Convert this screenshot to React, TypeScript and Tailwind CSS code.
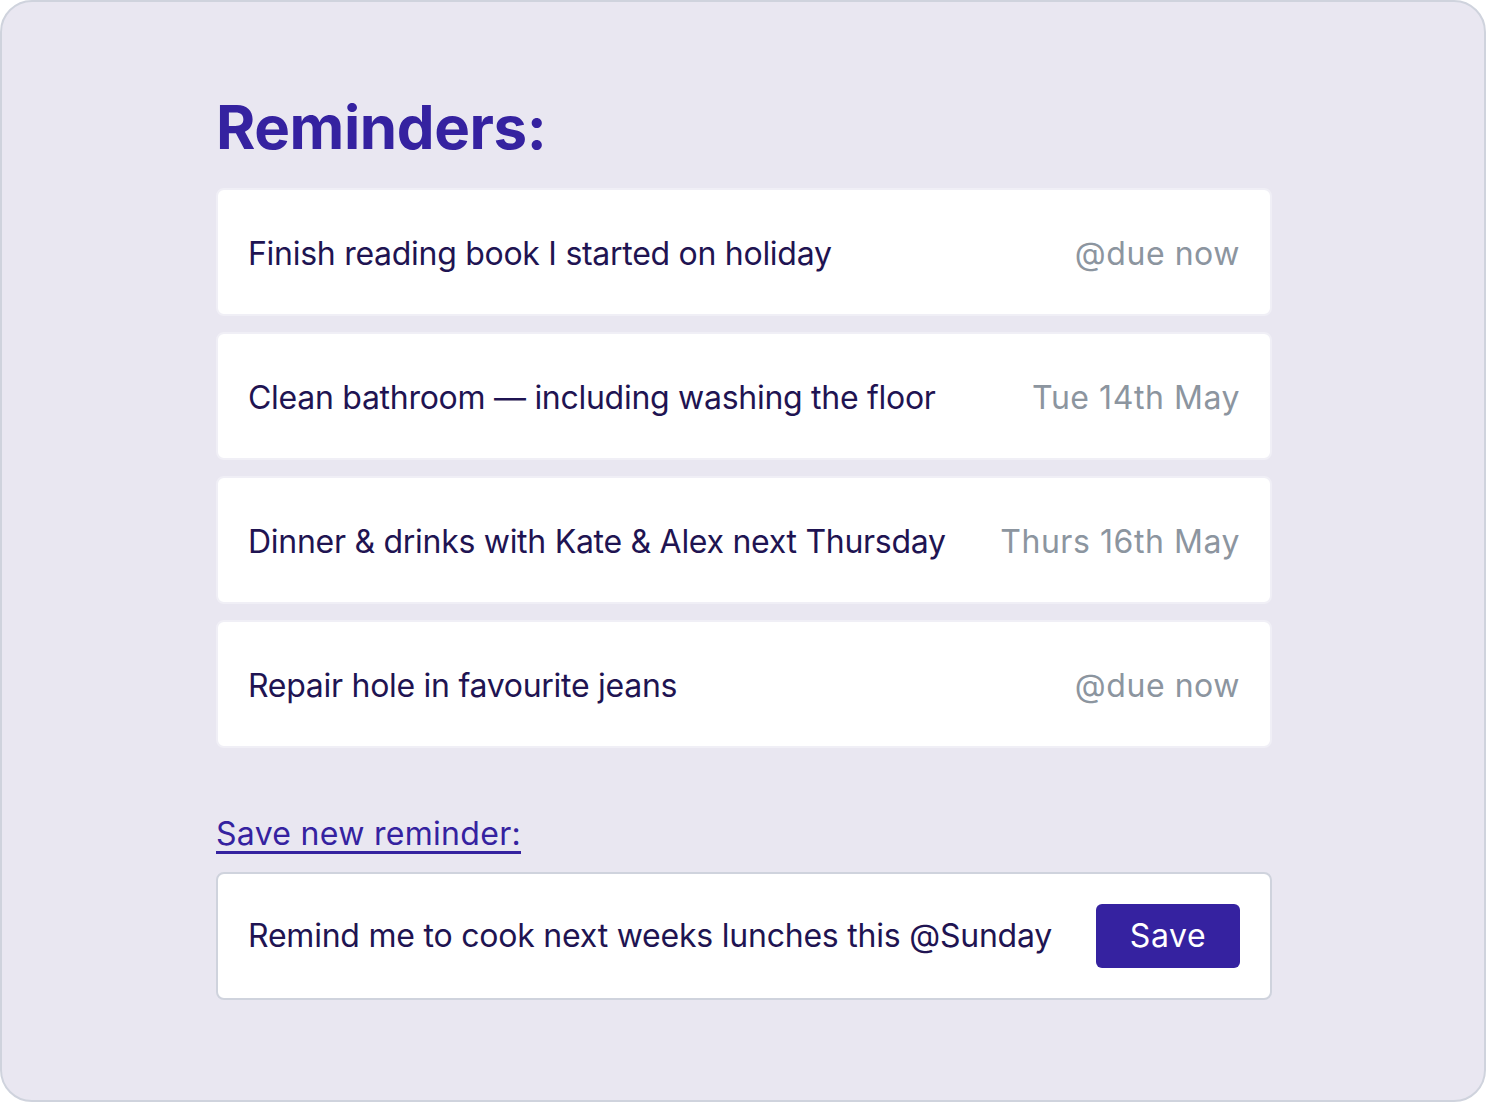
import React from "react";

const items = [
  { text: "Finish reading book I started on holiday", due: "@due now" },
  { text: "Clean bathroom — including washing the floor", due: "Tue 14th May" },
  { text: "Dinner & drinks with Kate & Alex next Thursday", due: "Thurs 16th May" },
  { text: "Repair hole in favourite jeans", due: "@due now" },
];

export default function App() {
  return (
    <div
      className="w-[1486px] h-[1102px] box-border border-2 border-[#cfd3dd] rounded-[32px] bg-[#e9e7f1] pl-[214px] pt-[90px]"
      style={{ fontFamily: "Inter, 'Noto Sans', sans-serif" }}
    >
      <div className="w-[1056px]">
        <h1 className="text-[60px] leading-[70px] font-bold text-[#3522a0] tracking-[-0.4px]">Reminders:</h1>
        <div className="mt-[26px] flex flex-col gap-[16px]">
          {items.map((it, i) => (
            <div
              key={i}
              className="h-[128px] box-border bg-white border-2 border-[#f0eff6] rounded-[8px] flex items-center justify-between px-[30px] pt-[4px]"
            >
              <span className="text-[32px] text-[#1f1452] tracking-[-0.28px]">{it.text}</span>
              <span className="text-[32px] text-[#8c959f] tracking-[0.55px]">{it.due}</span>
            </div>
          ))}
        </div>
        <div className="mt-[66px]">
          <a className="text-[32px] leading-[40px] text-[#3522a0] tracking-[0.3px] underline decoration-[3px] underline-offset-[6px]">
            Save new reminder:
          </a>
        </div>
        <div className="mt-[18px] h-[128px] box-border bg-white border-2 border-[#cfd3dd] rounded-[8px] flex items-center justify-between pl-[30px] pr-[30px]">
          <span className="text-[32px] text-[#1f1452] tracking-[-0.22px]">Remind me to cook next weeks lunches this @Sunday</span>
          <button className="w-[144px] h-[64px] bg-[#3522a0] rounded-[6px] text-white text-[32px] tracking-[0.6px]">Save</button>
        </div>
      </div>
    </div>
  );
}
